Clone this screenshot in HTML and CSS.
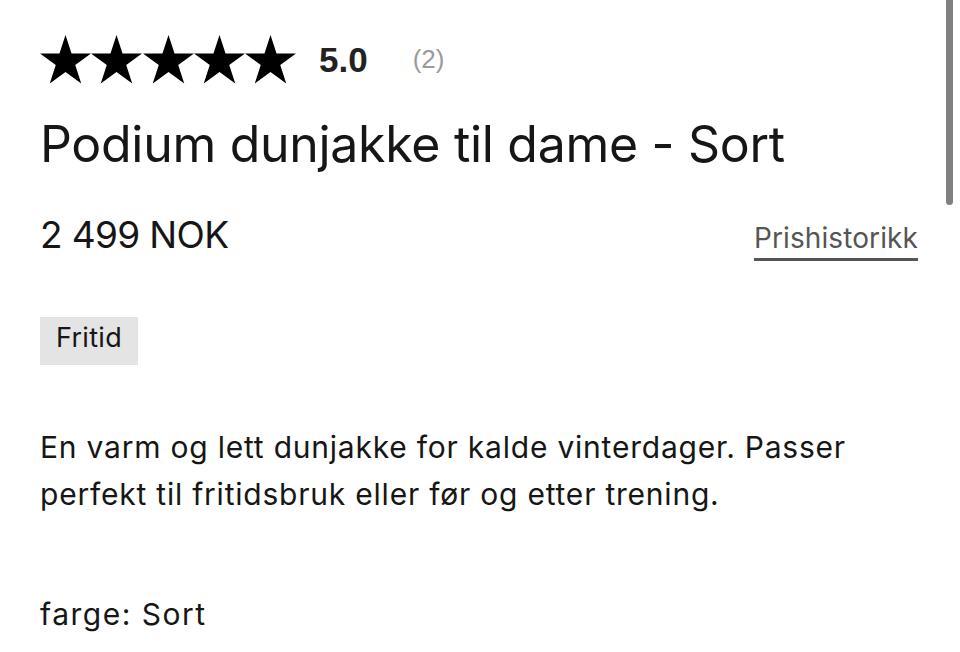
FILE: index.html
```html
<!DOCTYPE html>
<html lang="no">
<head>
	<meta charset="UTF-8">
	<meta name="viewport" content="width=device-width, initial-scale=1.0">
	<title>Podium dunjakke til dame - Sort</title>
	<link rel="stylesheet" href="styles.css">
</head>
<body>

	<div class="product">
		<div class="rating">
			<div class="stars">
				<svg class="star" viewBox="0 0 51 49"><polygon points="25.5,0 31.52,18.52 51,18.52 35.24,29.96 41.25,48.48 25.5,37.04 9.75,48.48 15.76,29.96 0,18.52 19.48,18.52"/></svg>
				<svg class="star" viewBox="0 0 51 49"><polygon points="25.5,0 31.52,18.52 51,18.52 35.24,29.96 41.25,48.48 25.5,37.04 9.75,48.48 15.76,29.96 0,18.52 19.48,18.52"/></svg>
				<svg class="star" viewBox="0 0 51 49"><polygon points="25.5,0 31.52,18.52 51,18.52 35.24,29.96 41.25,48.48 25.5,37.04 9.75,48.48 15.76,29.96 0,18.52 19.48,18.52"/></svg>
				<svg class="star" viewBox="0 0 51 49"><polygon points="25.5,0 31.52,18.52 51,18.52 35.24,29.96 41.25,48.48 25.5,37.04 9.75,48.48 15.76,29.96 0,18.52 19.48,18.52"/></svg>
				<svg class="star" viewBox="0 0 51 49"><polygon points="25.5,0 31.52,18.52 51,18.52 35.24,29.96 41.25,48.48 25.5,37.04 9.75,48.48 15.76,29.96 0,18.52 19.48,18.52"/></svg>
			</div>
			<span class="score">5.0</span>
			<span class="count">(2)</span>
		</div>

		<h1 class="title">Podium dunjakke til dame - Sort</h1>

		<div class="price-row">
			<span class="price">2 499 NOK</span>
			<a class="history" href="#">Prishistorikk</a>
		</div>

		<span class="tag">Fritid</span>

		<p class="description">En varm og lett dunjakke for kalde vinterdager. Passer perfekt til fritidsbruk eller før og etter trening.</p>

		<p class="color">farge: Sort</p>
	</div>

	<div class="scrollbar"></div>

</body>
</html>
```

FILE: styles.css
```css
body {
	margin: 0;
	background: #fff;
	color: #161616;
	font-family: Inter, "Liberation Sans", Arial, sans-serif;
}
.product {
	padding: 35px 42px 0 40px;
}
.rating {
	display: flex;
	align-items: center;
	height: 49px;
}
.stars {
	display: flex;
	width: 256px;
	justify-content: space-between;
}
.star {
	width: 51px;
	height: 49px;
	fill: #000;
}
.score {
	margin-left: 23px;
	font-family: "Liberation Sans", Arial, sans-serif;
	font-size: 35px;
	font-weight: bold;
	color: #222;
}
.count {
	margin-left: 45px;
	font-family: "Liberation Sans", Arial, sans-serif;
	font-size: 26px;
	color: #9a9a9a;
}
.title {
	margin: 30px 0 0;
	font-size: 50px;
	font-weight: normal;
	line-height: 60px;
	letter-spacing: -0.3px;
}
.price-row {
	display: flex;
	justify-content: space-between;
	align-items: baseline;
	margin-top: 38px;
}
.price {
	font-size: 37px;
	line-height: 46px;
	letter-spacing: -0.65px;
}
.history {
	display: inline-block;
	font-size: 28px;
	line-height: 29px;
	color: #555;
	text-decoration: none;
	padding-bottom: 5px;
	border-bottom: 3px solid #555;
	letter-spacing: 0.1px;
}
.tag {
	display: inline-block;
	margin-top: 56px;
	padding: 0 16px 6px;
	line-height: 42px;
	font-size: 27px;
	background: #e4e4e4;
	letter-spacing: 0.3px;
}
.description {
	margin: 59px 0 0;
	font-size: 30px;
	line-height: 47px;
	letter-spacing: 0.78px;
}
.color {
	margin: 73px 0 0;
	font-size: 30px;
	line-height: 47px;
	letter-spacing: 1.5px;
}
.scrollbar {
	position: fixed;
	top: 0;
	left: 946px;
	width: 7px;
	height: 205px;
	border-radius: 0 0 4px 4px;
	background: #808080;
}
```
